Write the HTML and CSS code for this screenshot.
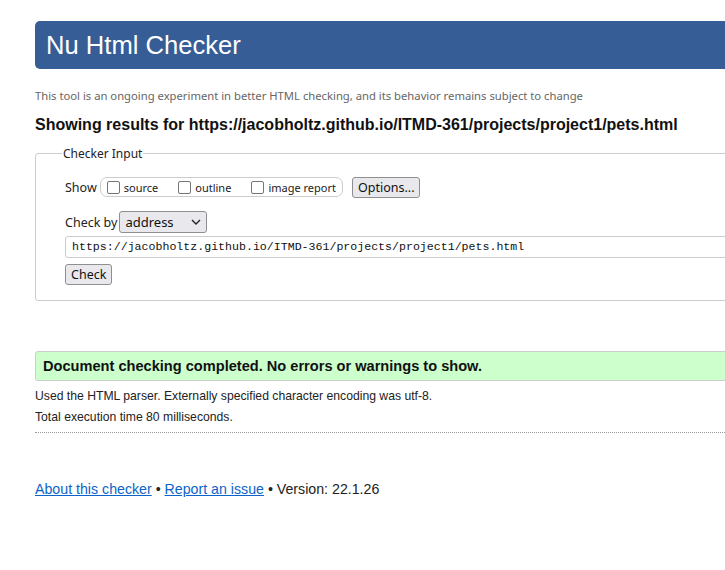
FILE: index.html
```html
<!DOCTYPE html>
<html>
<head>
<meta charset="utf-8">
<title>Nu Html Checker</title>
<link rel="stylesheet" href="styles.css">
</head>
<body>
<div class="page">
  <h1 class="banner">Nu Html Checker</h1>
  <p class="tagline">This tool is an ongoing experiment in better HTML checking, and its behavior remains subject to change</p>
  <h2 class="results-title">Showing results for https://jacobholtz.github.io/ITMD-361/projects/project1/pets.html</h2>
  <fieldset class="checker">
    <legend class="legend">Checker Input</legend>
    <div class="show-row">
      <span class="label">Show</span>
      <span class="opts">
        <label class="opt"><span class="box"></span>source</label>
        <label class="opt"><span class="box"></span>outline</label>
        <label class="opt"><span class="box"></span>image report</label>
      </span>
      <span class="btn">Options...</span>
    </div>
    <div class="checkby-row">
      <span class="label">Check by</span>
      <span class="select">address
        <svg class="chev" width="10" height="6" viewBox="0 0 10 6"><path d="M1 1 L5 5 L9 1" fill="none" stroke="#222" stroke-width="1.4"/></svg>
      </span>
    </div>
    <div class="url">https://jacobholtz.github.io/ITMD-361/projects/project1/pets.html</div>
    <div class="check-row"><span class="btn">Check</span></div>
  </fieldset>
  <p class="success">Document checking completed. No errors or warnings to show.</p>
  <p class="info">Used the HTML parser. Externally specified character encoding was utf-8.</p>
  <p class="info">Total execution time 80 milliseconds.</p>
  <div class="rule"></div>
  <p class="footer"><a href="#">About this checker</a> • <a href="#">Report an issue</a> • Version: 22.1.26</p>
</div>
</body>
</html>
```
FILE: styles.css
```css
html { overflow: hidden; }
body {
  margin: 0;
  background: #fff;
  font-family: "Liberation Sans", Arial, sans-serif;
  color: #222;
}
.page {
  width: 960px;
  padding: 21px 0 0 35px;
}
.banner {
  margin: 0;
  height: 48px;
  box-sizing: border-box;
  padding: 0 11px;
  background: #365d95;
  color: #fff;
  font-weight: normal;
  font-size: 25.6px;
  line-height: 48px;
  border-radius: 5px;
}
.tagline {
  margin: 19px 0 0;
  font-family: "Noto Sans", sans-serif;
  font-size: 11.25px;
  line-height: 16px;
  color: #666;
}
.results-title {
  margin: 11px 0 0;
  font-size: 16px;
  line-height: 20px;
  color: #111;
}
.checker {
  margin: 10px 0 0;
  padding: 8px 28px 15px 29px;
  border: 1px solid #ccc;
  border-radius: 3px;
  font-family: "Noto Sans", sans-serif;
  font-size: 12.5px;
}
.legend {
  padding: 0 1px;
  margin-left: -3px;
  font-size: 12px;
  color: #222;
}
.show-row {
  display: flex;
  align-items: center;
  margin-top: 6px;
  height: 22px;
}
.label { margin-right: 3px; }
.opts {
  display: flex;
  align-items: center;
  height: 18px;
  padding: 0 6px;
  border: 1px solid #ccc;
  border-radius: 7px;
}
.opt {
  display: flex;
  align-items: center;
  font-size: 11px;
  margin-right: 20px;
}
.opt:last-child { margin-right: 0; }
.box {
  width: 11px;
  height: 11px;
  border: 1px solid #767676;
  border-radius: 2px;
  margin-right: 4px;
  background: #fff;
}
.btn {
  display: inline-flex;
  align-items: center;
  height: 19px;
  padding: 0 5px;
  box-sizing: content-box;
  border: 1px solid #8f8f8f;
  border-radius: 3px;
  background: #e9e9ed;
  font-family: "Noto Sans", sans-serif;
  font-size: 12.5px;
  color: #111;
}
.show-row .btn { margin-left: 9px; }
.checkby-row {
  display: flex;
  align-items: center;
  margin-top: 13px;
  height: 22px;
}
.checkby-row .label { margin-right: 2px; }
.select {
  display: inline-flex;
  align-items: center;
  justify-content: space-between;
  width: 76px;
  height: 20px;
  padding: 0 5px;
  border: 1px solid #8f8f8f;
  border-radius: 3px;
  background: #e9e9ed;
  font-size: 13px;
  color: #111;
}
.url {
  margin-top: 3px;
  height: 20px;
  line-height: 20px;
  padding: 0 6px;
  border: 1px solid #ccc;
  border-radius: 3px;
  font-family: "Liberation Mono", monospace;
  font-size: 11.6px;
  color: #111;
}
.check-row { margin-top: 6px; display: flex; }
.success {
  margin: 50px 0 0;
  height: 28px;
  line-height: 28px;
  padding: 0 7px;
  background: #ccffcc;
  border: 1px solid #ccc;
  border-radius: 3px;
  font-weight: bold;
  font-size: 14.6px;
  color: #111;
}
.info {
  margin: 8px 0 0;
  font-size: 12.2px;
  line-height: 14px;
}
.info + .info { margin-top: 7px; }
.rule {
  margin-top: 8px;
  border-top: 1px dotted #999;
}
.footer {
  margin: 47px 0 0;
  font-size: 14.2px;
  line-height: 18px;
  color: #222;
}
.footer a { color: #0b63c9; }
```
